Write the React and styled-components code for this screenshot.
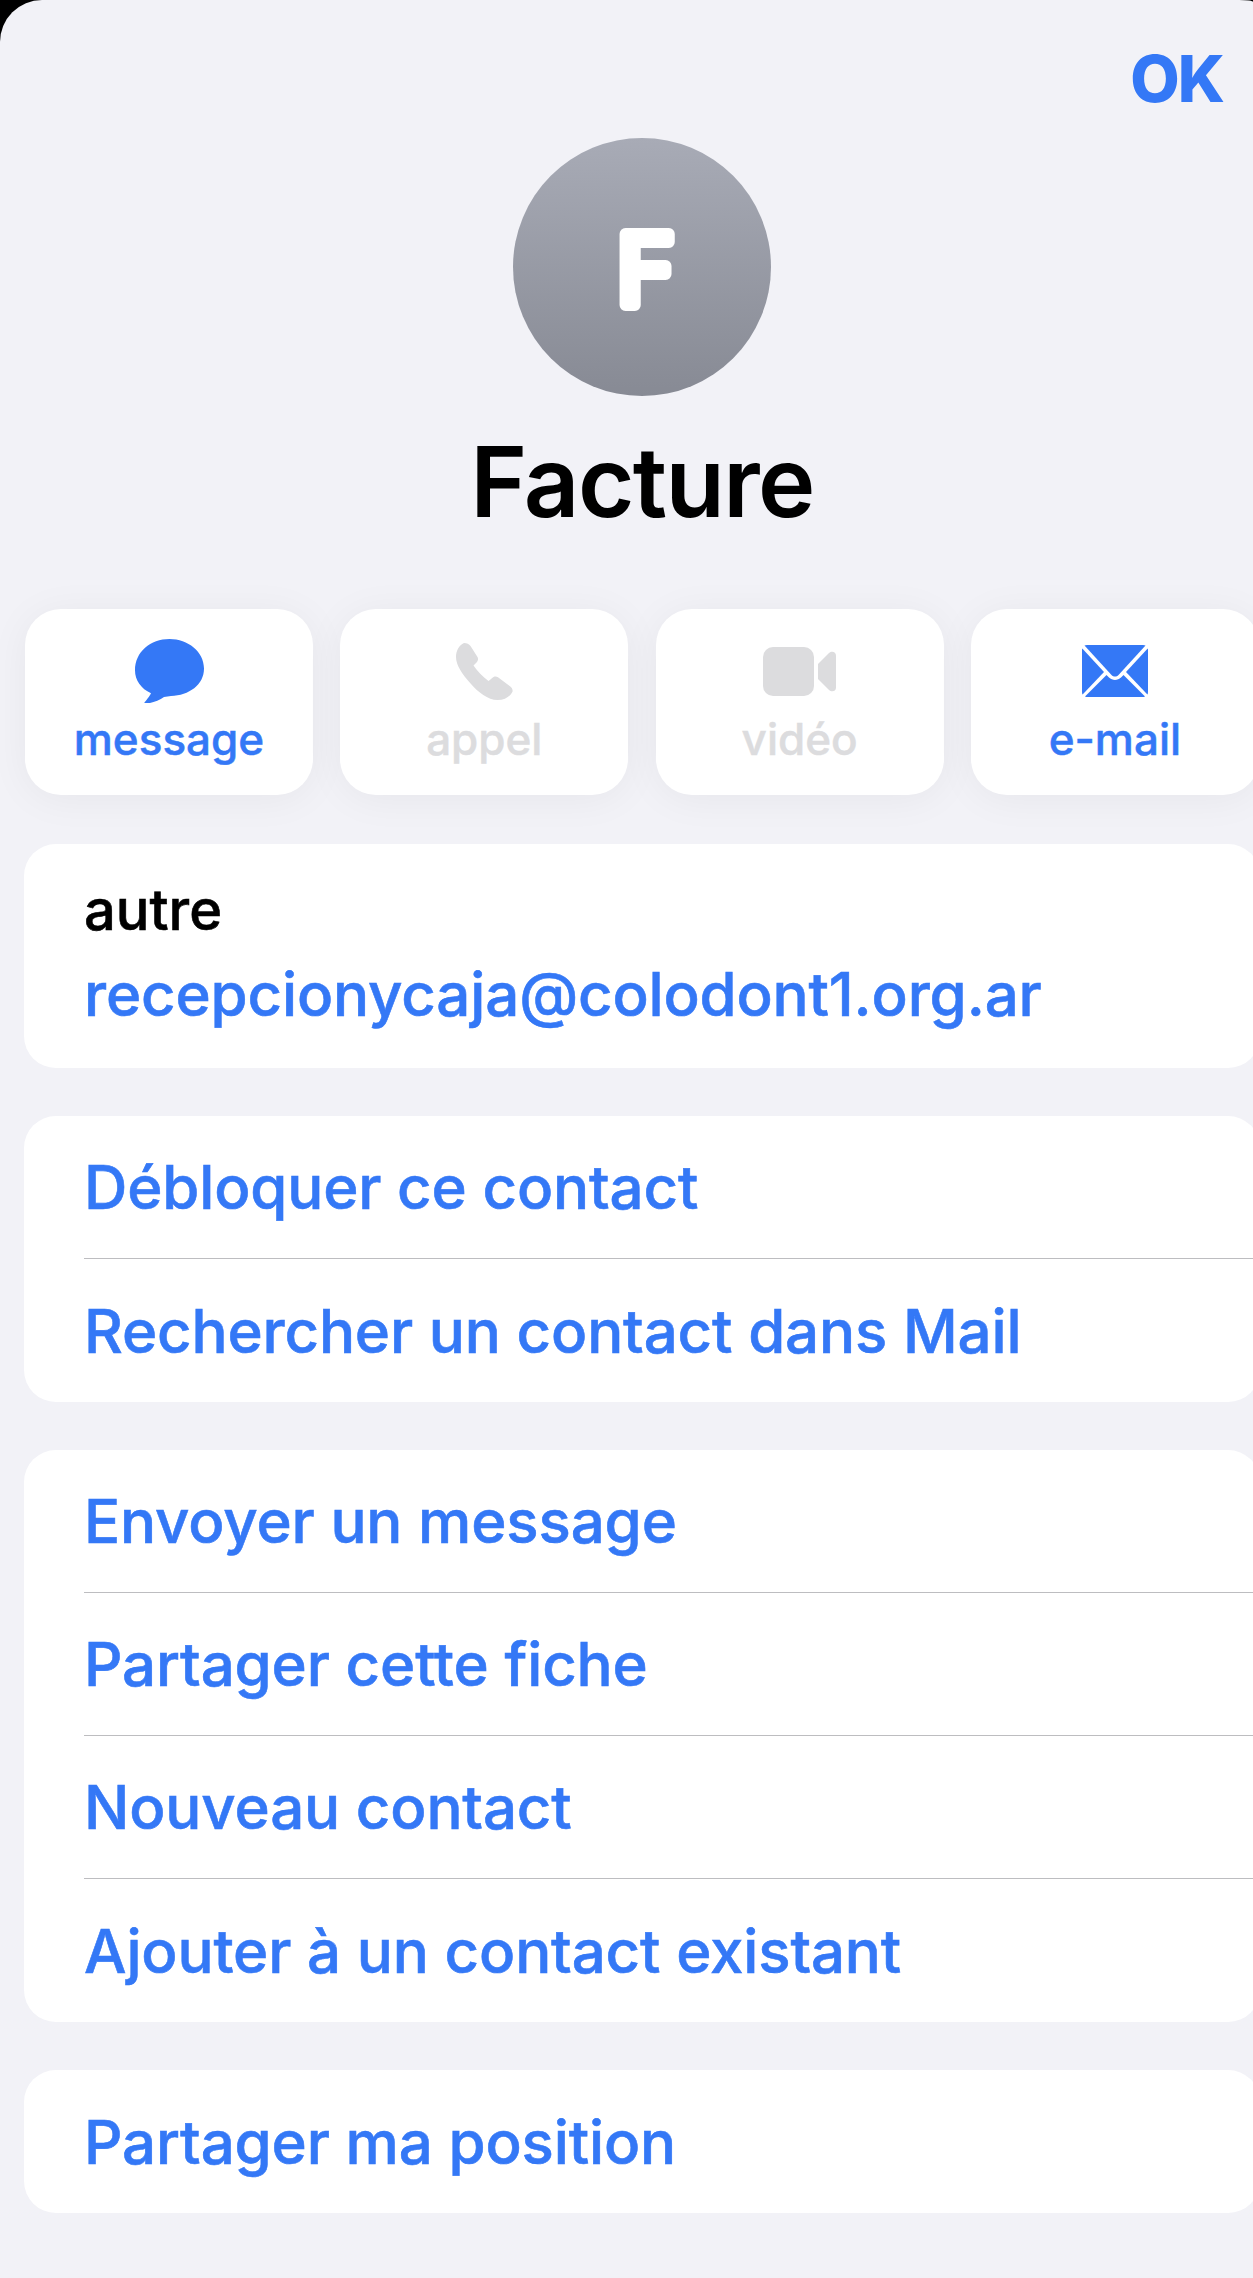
import React from 'react'
import styled, { createGlobalStyle } from 'styled-components'

const Global = createGlobalStyle`
  html, body {
    margin: 0;
    background: #000;
    overflow: hidden;
  }
  * { box-sizing: border-box; }
`;

const Sheet = styled.div`
  width: 1253px;
  height: 2278px;
  background: #f2f2f7;
  border-top-left-radius: 42px;
  border-top-right-radius: 14px 2px;
  overflow: hidden;
  font-family: Inter, "Liberation Sans", sans-serif;
  padding-left: 24px;
`;

const Content = styled.div`
  width: 1236px;
  display: flex;
  flex-direction: column;
`;

const TopBar = styled.div`
  display: flex;
  justify-content: flex-end;
  height: 138px;
  padding: 40px 37px 0 0;
`;

const Done = styled.span`
  font-size: 64px;
  line-height: 78px;
  font-weight: 800;
  letter-spacing: -2px;
  color: #3478f6;
`;

const Avatar = styled.div`
  width: 258px;
  height: 258px;
  border-radius: 50%;
  align-self: center;
  display: flex;
  align-items: center;
  justify-content: center;
  background: linear-gradient(180deg, #a8abb6 0%, #878a94 100%);
`;

const Monogram = styled.svg`
  width: 258px;
  height: 258px;
  font-size: 98px;
  font-weight: 400;
  fill: #fff;
  stroke: #fff;
  stroke-width: 12px;
  stroke-linejoin: round;
`;

const Name = styled.h1`
  margin: 27px 0 0;
  height: 118px;
  font-size: 97px;
  line-height: 118px;
  font-weight: 600;
  letter-spacing: -1.6px;
  color: #000;
  text-align: center;
`;

const Actions = styled.div`
  display: flex;
  gap: 27.3px;
  margin: 68px 0 0 1px;
`;

const Action = styled.div`
  flex: 0 0 288px;
  height: 186px;
  border-radius: 36px;
  background: #fff;
  box-shadow: 0 4px 40px rgba(0, 0, 0, 0.05);
  display: flex;
  flex-direction: column;
  align-items: center;
  padding-top: 26px;
  color: ${(props) => (props.$off ? '#dcdcde' : '#3478f6')};
`;

const IconSlot = styled.div`
  height: 72px;
  display: flex;
  align-items: center;
  justify-content: center;
`;

const ActionLabel = styled.span`
  font-size: 44px;
  line-height: 52px;
  font-weight: 500;
  -webkit-text-stroke: 0.5px currentColor;
  margin-top: 6px;
`;

const Card = styled.div`
  background: #fff;
  border-radius: 32px;
  margin-top: ${(props) => props.$gap || 48}px;
`;

const InfoRow = styled.div`
  height: 224px;
  padding: 33px 0 0 60px;
`;

const InfoLabel = styled.div`
  font-size: 56px;
  line-height: 66px;
  font-weight: 500;
  -webkit-text-stroke: 0.6px currentColor;
  color: #000;
`;

const InfoValue = styled.div`
  font-size: 60px;
  line-height: 73px;
  font-weight: 500;
  letter-spacing: -0.15px;
  -webkit-text-stroke: 0.6px currentColor;
  margin-top: 15px;
  color: #3478f6;
`;

const Row = styled.div`
  height: 143px;
  margin-left: 60px;
  display: flex;
  align-items: center;
  font-size: 60px;
  font-weight: 500;
  letter-spacing: -0.15px;
  -webkit-text-stroke: 0.6px currentColor;
  color: #3478f6;
  border-bottom: ${(props) => (props.$last ? 'none' : '1px solid #bdbdc0')};
`;

const MessageIcon = () => (
  <svg width="69" height="64" viewBox="0 0 69 64" fill="currentColor">
    <path d="M34.5 0C15.5 0 0 14 0 34c0 11 6 20 16 25-1 3-6 9-7 11 3 1 14-2 20-7l7-1c18-1 33-12 33-30C69 14 53 0 34.5 0Z" transform="scale(1 .92)" />
  </svg>
);

const PhoneIcon = () => (
  <svg width="57" height="57" viewBox="0 0 57 57" fill="currentColor">
    <path d="M8 0c3 0 5 1 6.500 3l7 11c1 2 .5 4-1 5.500l-3 3c4 6 9 11 15 15.500 3-2 4-4 6-4.500 1-.3 2.500 0 3.500.8l12 9c2 1.500 3 3.500 2.500 5.500-2 4-7 8.200-15 8.200C32 57 22 49 15 41 6 31 0 22 0 14 0 8 3 2 8 0Z" />
  </svg>
);

const VideoIcon = () => (
  <svg width="73" height="49" viewBox="0 0 73 49" fill="currentColor">
    <rect x="0" y="0" width="51" height="49" rx="10" />
    <path d="M55 17 66 6c2.500-2.500 7-1.500 7 2.500v32c0 4-4.500 5-7 2.500L55 32Z" />
  </svg>
);

const MailIcon = () => (
  <svg width="66" height="52" viewBox="0 0 66 52" fill="currentColor">
    <path d="M5 0h56c1 0 2 .2 2.500.6L36.500 30c-2 2-5 2-7 0L2.500.6C3 .2 4 0 5 0Z" />
    <path d="M0 5c0-.6.100-1 .3-1.500L22 27 .6 49.500C.2 49 0 48 0 47Z" />
    <path d="M66 5c0-.6-.1-1-.3-1.500L44 27l21.400 22.500c.4-.5.6-1.500.6-2.500Z" />
    <path d="M24.500 30 27 32.600c3.300 3.300 8.700 3.300 12 0l2.500-2.600 21.500 21.400c-.6.400-1.500.6-2.500.6H5.500c-1 0-1.900-.2-2.500-.6Z" />
  </svg>
);

const actions = [
  { label: 'message', icon: <MessageIcon /> },
  { label: 'appel', icon: <PhoneIcon />, off: true },
  { label: 'vidéo', icon: <VideoIcon />, off: true },
  { label: 'e-mail', icon: <MailIcon /> },
];

const groups = [
  ['Débloquer ce contact', 'Rechercher un contact dans Mail'],
  ['Envoyer un message', 'Partager cette fiche', 'Nouveau contact', 'Ajouter à un contact existant'],
  ['Partager ma position'],
];

const App = () => {
  return (
    <>
      <Global />
      <Sheet>
        <Content>
          <TopBar>
            <Done>OK</Done>
          </TopBar>
          <Avatar>
            <Monogram viewBox="0 0 258 258">
              <text x="133" y="167" textAnchor="middle">F</text>
            </Monogram>
          </Avatar>
          <Name>Facture</Name>
          <Actions>
            {actions.map((action) => (
              <Action key={action.label} $off={action.off}>
                <IconSlot>{action.icon}</IconSlot>
                <ActionLabel>{action.label}</ActionLabel>
              </Action>
            ))}
          </Actions>
          <Card $gap={49}>
            <InfoRow>
              <InfoLabel>autre</InfoLabel>
              <InfoValue>recepcionycaja@colodont1.org.ar</InfoValue>
            </InfoRow>
          </Card>
          {groups.map((rows) => (
            <Card key={rows[0]}>
              {rows.map((row, i) => (
                <Row key={row} $last={i === rows.length - 1}>{row}</Row>
              ))}
            </Card>
          ))}
        </Content>
      </Sheet>
    </>
  )
}

export default App
